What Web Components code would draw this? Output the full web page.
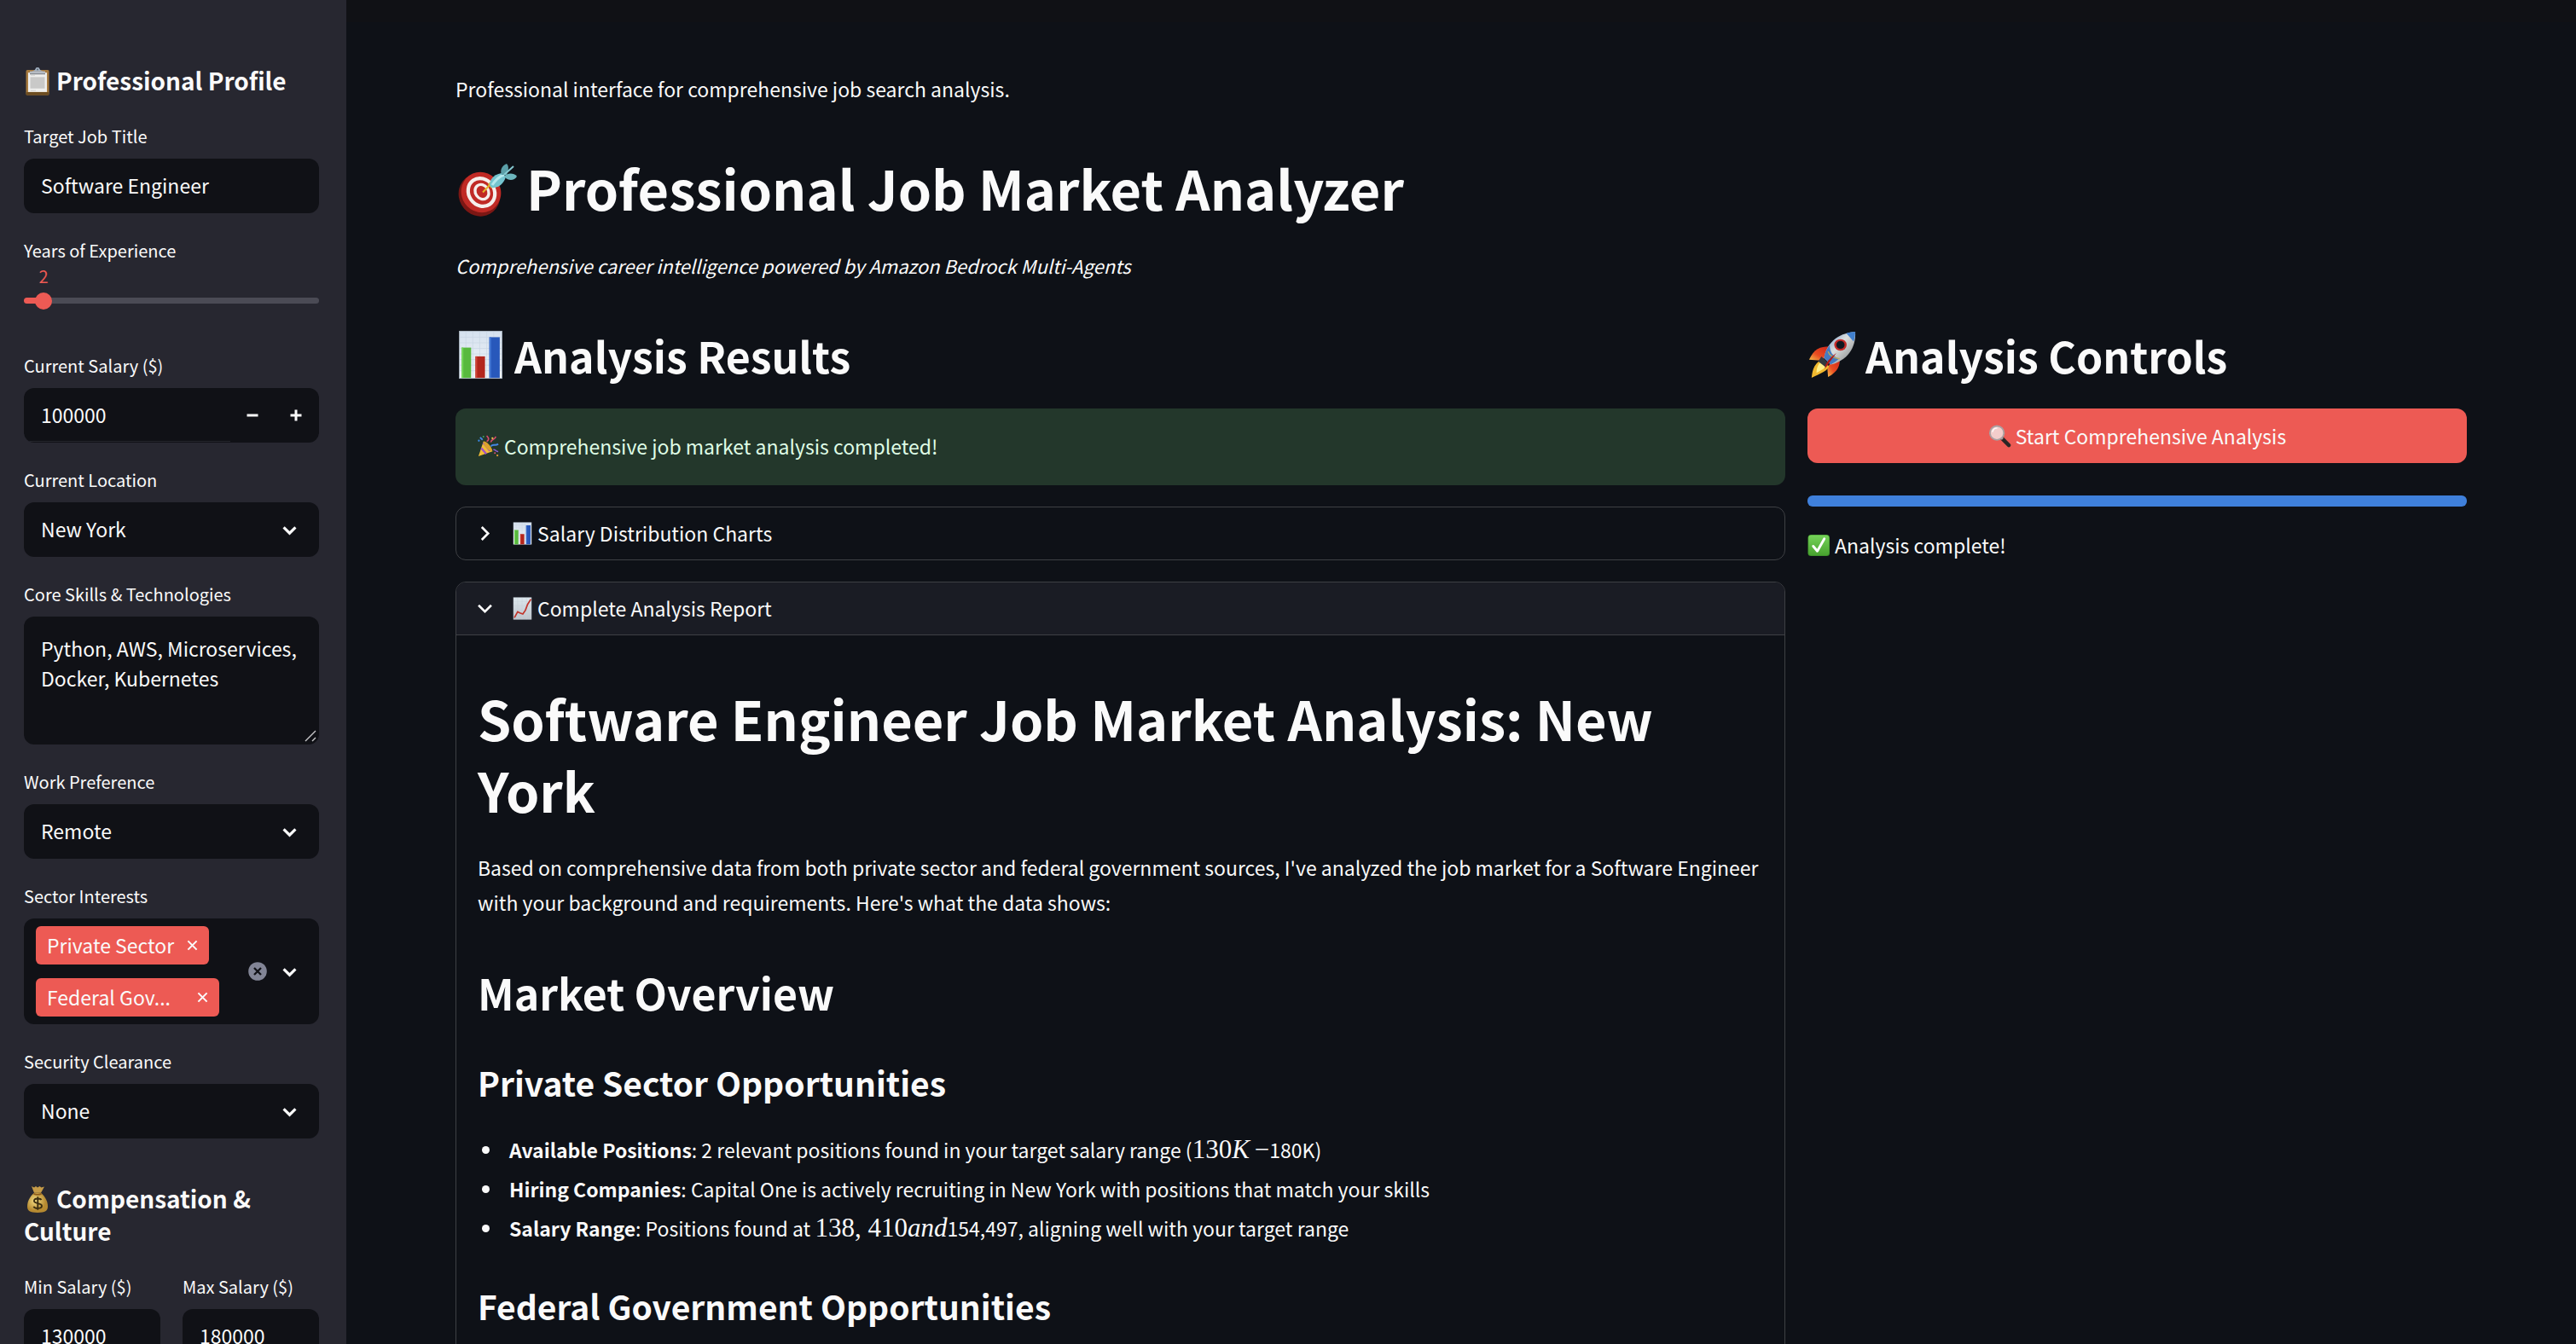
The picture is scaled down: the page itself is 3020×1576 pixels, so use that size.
<!DOCTYPE html>
<html lang="en">
<head>
<meta charset="utf-8">
<title>Professional Job Market Analyzer</title>
<style>
:root{--bg:#0e1117;--side:#272730;--field:#101116;--text:#fafafa;--red:#ed5a54;--green-bg:#23372b;--green-text:#dffde6;--blue:#3f80db;--line:#3e4044;--body:23px;--small:20px}
html{background:var(--bg)}
body{margin:0;color:var(--text);font:400 23px/41px "Noto Sans CJK SC","Open Sans",sans-serif}
</style>
</head>
<body>
<job-app></job-app>
<script>
const PICTURES = {
clipboard:['0 0 32 32','<rect x="2.500" y="3" width="27" height="28.500" rx="1.500" fill="#a77a3e"/><rect x="2.500" y="28" width="27" height="3.500" rx="1.500" fill="#6d4d20"/><rect x="5" y="6" width="22" height="22" fill="#efefed"/><rect x="7.500" y="11" width="17" height="13" fill="#c9c9c8"/><path d="M8 9h5M8 26.500h6" stroke="#d3d3d1"/><path d="M7 4.500h18v3H7z" fill="#b6bcc4"/><path d="M9 4.500c3-.5 4-1.500 4.500-2.500a2.500 2 0 0 1 5 0c.5 1 1.500 2 4.500 2.500z" fill="#a4b3c4"/><circle cx="16" cy="2.500" r="1" fill="#5d6872"/><path d="M7 7.500h18" stroke="#777b80"/>'],
bag:['0 0 32 32','<defs><radialGradient id="g" cx=".4" cy=".4"><stop offset="0" stop-color="#f6df85"/><stop offset="1" stop-color="#b68a31"/></radialGradient></defs><path d="M9 1l3 1.500L14 1l2 1.500L18.500 1l2 1.500L24 1.500l-4 7h-8z" fill="#c59b48"/><path d="M12 8.500C7 13 4 18 4 24c0 5 3 7 12 7s12-2 12-7c0-6-3-11-8-15.500z" fill="url(#g)"/><path d="M11.500 9.500q4.500 2 9 0" stroke="#8d5c1c" stroke-width="1.800" fill="none"/><path d="M20.500 16.500c-1-2-8.500-2.500-8.500 1.200 0 3.500 9 2 9 5.500 0 3.700-8.500 3.700-9.500.8M16.300 12.800v15" fill="none" stroke="#3a2d10" stroke-width="1.900"/>'],
target:['0 0 72 72','<ellipse cx="28" cy="44.500" rx="24" ry="25.500" fill="#7c1714" transform="rotate(-30 28 44.500)"/><ellipse cx="30" cy="41.500" rx="23" ry="24" fill="#c02a25" transform="rotate(-35 30 41.500)"/><ellipse cx="30.500" cy="41.500" rx="15" ry="17" fill="none" stroke="#f5efec" stroke-width="4.200" transform="rotate(-35 30.500 41.500)"/><ellipse cx="31" cy="41" rx="7.600" ry="9" fill="none" stroke="#f5efec" stroke-width="3.400" transform="rotate(-35 31 41)"/><path d="M32 41.500L42 31" stroke="#e5b62b" stroke-width="2"/><path d="M38 32l4 5 3-3-4-5z" fill="#e0b32b"/><path d="M40 33c0-5 3-12 14-14l5 4c-2 9-10 14-17 13z" fill="#74c4cf"/><path d="M43 33c4-6 8-10 14-12" stroke="#b3e8ed" stroke-width="3" fill="none"/><path d="M54 21c-2-5 0-11 6-13 3 3 2 8 0 13z" fill="#5b9fa8"/><path d="M57 23c3-4 11-5 15 0-3 5-10 5-14 1z" fill="#6db6be"/><path d="M57 21L68 11" stroke="#86cad2" stroke-width="2"/>'],
chart:['-2 0 58 62','<defs><linearGradient id="b" x2="0" y2="1"><stop stop-color="#d5e1ef"/><stop offset="1" stop-color="#f2f5f7"/></linearGradient></defs><rect x="2" y="1" width="50" height="60" fill="#aeb9c5"/><rect x="3" y="2" width="48" height="58" fill="url(#b)"/><path d="M3 9h48M3 16h48M3 23h48M3 30h48M3 37h48M3 44h48M3 51h48M10 2v58M18 2v58M26 2v58M34 2v58M42 2v58" stroke="#c8d5e5" stroke-width=".7"/><path d="M5 22h11v38H5z" fill="#58b93e"/><path d="M21 33h11v27H21z" fill="#b3261d"/><path d="M37 9h12v51H37z" fill="#2858bb"/><path d="M5 22h2v38H5z" fill="#76d65b"/><path d="M21 33h2v27h-2z" fill="#cf4437"/><path d="M37 9h2v51h-2z" fill="#4477d3"/>'],
trend:['-2 0 58 62','<defs><linearGradient id="b" x2="0" y2="1"><stop stop-color="#dde7ed"/><stop offset="1" stop-color="#bfc5cd"/></linearGradient></defs><rect x="2" y="1" width="50" height="60" fill="#b4bcc7"/><rect x="3" y="2" width="48" height="58" fill="url(#b)"/><path d="M3 12h48M3 24h48M3 36h48M3 48h48M14 2v58M26 2v58M38 2v58" stroke="#c6d1d9"/><path d="M5 56L14 40 20 43 28 46 35 36 41 20 50 6" fill="none" stroke="#c1342b" stroke-width="4"/>'],
rocket:['0 0 60 60','<defs><linearGradient id="r" x1="0" y1="0" x2="1" y2="1"><stop stop-color="#5c8cc8"/><stop offset=".45" stop-color="#dcdedd"/><stop offset="1" stop-color="#73777b"/></linearGradient><linearGradient id="f" x1="1" y1="0" x2="0" y2="1"><stop stop-color="#cf241a"/><stop offset=".6" stop-color="#ea4d22"/><stop offset="1" stop-color="#f7c24b"/></linearGradient></defs><path d="M27 20C15 20 8 23 2 36l14 1 9-6z" fill="url(#f)"/><path d="M39 33c1 10-2 17-14 24l-1-12 10-12z" fill="url(#f)"/><path d="M17 36l9 8c-1 5-9 8-21 14 1-6 1-16 12-22z" fill="#f1b92f"/><path d="M17 38l6 5c-2 4-7 6-12 9 0-5 1-10 6-14z" fill="#fff08a"/><path d="M17 32l9 9-4 4-9-7z" fill="#34383d"/><path d="M20 34C23 17 35 4 58 2c1 20-10 35-30 40z" fill="url(#r)"/><path d="M20 34c1-6 3-11 7-16 0 8 3 13 11 17-3 3-6 5-10 7z" fill="#457ac0"/><path d="M47 4q5-2 11-2 0 6-2 12z" fill="#4180ce"/><path d="M25 26q2 7 14 9" fill="none" stroke="#b9a75e" stroke-width="1.500"/><ellipse cx="40" cy="18" rx="7.500" ry="7" fill="#c32a28"/><ellipse cx="40" cy="18" rx="5" ry="4.800" fill="#111720"/><path d="M35 28L21 47q1-10 14-19z" fill="#b31815"/>'],
party:['0 0 28 28','<path d="M2 26L8 8q9 3 11 12z" fill="#f1bd37"/><path d="M5.500 16l6 7M8 9.500l8 10" stroke="#9f50c5" stroke-width="2.400"/><path d="M8 8c3-1 10 6 11 12-4 0-11-6-11-12z" fill="#dba12c"/><path d="M12 8c3-2 3-4 0-7M17 9c1-5 5-2 6-7" stroke="#dd4970" stroke-width="1.700" fill="none"/><path d="M17 14c3-4 5 0 9-3M4 3l3 3" stroke="#4586e4" stroke-width="2" fill="none"/><path d="M20 18c3-1 3 3 6 2" stroke="#8e59d5" stroke-width="1.500" fill="none"/><circle cx="2.500" cy="7" r="1.200" fill="#3987e6"/><circle cx="19" cy="4" r="1.200" fill="#f0ce45"/><circle cx="25" cy="25" r="1.200" fill="#e69e35"/><circle cx="22" cy="22" r="1" fill="#e45370"/><circle cx="8" cy="2" r="1" fill="#3fa766"/>'],
search:['0 0 28 28','<path d="M17 17l8 8" stroke="#292525" stroke-width="4.500" stroke-linecap="round"/><path d="M14.500 14.500l3 3" stroke="#a99a99" stroke-width="3"/><circle cx="10.500" cy="10" r="8.500" fill="#f3cdcb" stroke="#aaa0a1" stroke-width="2"/><path d="M5 9q1-5 6-5" stroke="#fff" stroke-width="1.500" fill="none"/>'],
check:['0 0 28 28','<defs><linearGradient id="c" x2="0" y2="1"><stop stop-color="#76d35a"/><stop offset="1" stop-color="#48a32f"/></linearGradient></defs><rect x=".5" y="1" width="26.500" height="26" rx="4" fill="#3e932a"/><rect x="1.200" y="1.500" width="25" height="24.500" rx="3.500" fill="url(#c)"/><path d="M7 15l5 6 8.500-15" fill="none" stroke="#fff" stroke-width="3" stroke-linecap="round" stroke-linejoin="round"/>'],
down:['0 0 16 16','<path d="M1.500 5L8 11.500 14.500 5" fill="none" stroke="currentColor" stroke-width="3"/>'],
thindown:['0 0 16 16','<path d="M1 4.500L8 11.500 15 4.500" fill="none" stroke="currentColor" stroke-width="2.500"/>'],
thinright:['0 0 16 16','<path d="M4.500 1L11.500 8 4.500 15" fill="none" stroke="currentColor" stroke-width="2.500"/>'],
minus:['0 0 14 14','<path d="M.5 7h13" stroke="currentColor" stroke-width="3"/>'],
plus:['0 0 14 14','<path d="M.5 7h13M7 .5v13" stroke="currentColor" stroke-width="3"/>'],
cross:['0 0 14 14','<path d="M1.500 1.500l11 11M12.500 1.500l-11 11" stroke="currentColor" stroke-width="2.200"/>'],
clear:['0 0 22 22','<circle cx="11" cy="11" r="10.800" fill="#828596"/><path d="M7 7l8 8M15 7l-8 8" stroke="#101116" stroke-width="2.300"/>'],
grip:['0 0 16 16','<path d="M2 14L14 2M10 14l4-4" stroke="#c9c9cb" stroke-width="1.400"/>']
};
const BASE = `*{box-sizing:border-box}:host{display:block}:host([hidden]){display:none}input,select,textarea,button{font:inherit;color:inherit;margin:0;border:0;background:none;outline:0}button{cursor:pointer;padding:0}`;
class Base extends HTMLElement {
  constructor(){ super(); this.attachShadow({mode:'open'}); }
  connectedCallback(){ this.shadowRoot.innerHTML = `<style>${BASE}${this.css()}</style>${this.html()}`; }
  css(){ return ''; }
  html(){ return '<slot></slot>'; }
  a(n, d=''){ return this.getAttribute(n) ?? d; }
}
const define = (name, css, html) => customElements.define(name, class extends Base {
  css(){ return typeof css === 'function' ? css(this) : css; }
  html(){ return html ? (typeof html === 'function' ? html(this) : html) : '<slot></slot>'; }
});

define('ui-pic', e => `:host{display:inline-block;flex:none;width:${e.a('w','16')}px;height:${e.a('h', e.a('w','16'))}px;line-height:0;vertical-align:middle}svg{display:block;width:100%;height:100%}`,
  e => { const [box, art] = PICTURES[e.a('name')]; return `<svg viewBox="${box}" preserveAspectRatio="none" aria-hidden="true">${art}</svg>`; });

const FIELD = `:host{min-width:0}label,.label{display:block;font-size:var(--small);line-height:36px;margin-bottom:8px}.box{display:flex;align-items:center;background:var(--field);border-radius:12px;min-height:64px}`;

define('text-field', FIELD + `input{width:100%;height:64px;padding:0 20px 2px;border-radius:12px}`,
  e => `<label for="i">${e.a('label')}</label><div class="box"><input id="i" type="text" value="${e.a('value')}"></div>`);

define('number-field', FIELD + `.box{overflow:hidden;padding-right:2px}input{flex:1;min-width:0;height:64px;padding:0 0 2px 20px}:host([underline]) input{height:62px;border-bottom:1px solid #24252c}button{flex:none;width:51px;height:64px;display:grid;place-items:center}`,
  e => `<label for="i">${e.a('label')}</label><div class="box"><input id="i" type="text" inputmode="numeric" value="${e.a('value')}">${e.hasAttribute('steps') ? '<button aria-label="Decrease"><ui-pic name="minus" w="14"></ui-pic></button><button aria-label="Increase"><ui-pic name="plus" w="14"></ui-pic></button>' : ''}</div>`);

define('select-field', FIELD + `.box{display:grid}.box>*{grid-area:1/1}select{appearance:none;width:100%;height:64px;padding:0 64px 2px 20px;border-radius:12px}option{background:#101116}ui-pic{justify-self:end;margin-right:26px;pointer-events:none}`,
  e => `<label for="i">${e.a('label')}</label><div class="box"><select id="i"><option>${e.a('value')}</option></select><ui-pic name="down" w="17"></ui-pic></div>`);

define('area-field', FIELD + `.box{position:relative}textarea{display:block;width:100%;height:150px;padding:20px;line-height:35px;resize:none;overflow:hidden}ui-pic{position:absolute;right:2px;bottom:2px}`,
  e => `<label for="i">${e.a('label')}</label><div class="box"><textarea id="i">${e.a('value')}</textarea><ui-pic name="grip" w="16"></ui-pic></div>`);

define('slider-field', e => FIELD + `:host{height:109px}label{margin:0 0 2px}output{display:block;width:calc(200% * ${e.a('value')} / ${e.a('max')});text-align:center;color:var(--red);font-size:var(--small);line-height:20px}.rail{display:grid;align-items:center;margin-top:9px}.rail>*{grid-area:1/1}.bar{height:7px;border-radius:4px;background:linear-gradient(to right,var(--red) calc(100% * ${e.a('value')} / ${e.a('max')}),#4b4b55 0)}input{appearance:none;height:19px;margin:0 -10px;padding:0}input::-webkit-slider-thumb{appearance:none;width:20px;height:20px;border-radius:50%;background:var(--red)}`,
  e => `<label for="i">${e.a('label')}</label><output for="i">${e.a('value')}</output><div class="rail"><div class="bar"></div><input id="i" type="range" min="0" max="${e.a('max')}" value="${e.a('value')}"></div>`);

define('ui-tag', `:host{display:flex;align-items:center;gap:15px;height:45px;padding:0 13px;background:var(--red);border-radius:6px;width:max-content}span{white-space:nowrap;line-height:41px}:host([long]) span{width:161px}button{display:grid;place-items:center}`,
  `<span><slot></slot></span><button aria-label="Remove"><ui-pic name="cross" w="13"></ui-pic></button>`);

define('multi-field', FIELD + `.box{padding:9px 26px 9px 14px}.tags{flex:1;min-width:0;display:grid;gap:16px}.tools{display:flex;gap:18px;align-items:center}button{display:grid}`,
  e => `<div class="label" id="l">${e.a('label')}</div><div class="box" role="group" aria-labelledby="l"><div class="tags"><slot></slot></div><div class="tools"><button aria-label="Clear all"><ui-pic name="clear" w="22"></ui-pic></button><button aria-label="Open"><ui-pic name="down" w="17"></ui-pic></button></div></div>`);

define('side-title', `h3{margin:0;font-weight:700;font-size:28px;line-height:38px;padding-bottom:29px}ui-pic{margin:-6px 6px 0 0}`,
  e => `<h3><ui-pic name="${e.a('icon')}" w="32" h="33"></ui-pic><slot></slot></h3>`);

define('side-panel', `:host{background:var(--side);width:406px;flex:none;padding:75px 32px 0 28px;height:100vh;overflow:hidden}.stack{display:grid;grid-template-columns:minmax(0,1fr);gap:26px}.second{margin-top:51px}.pair{display:grid;grid-template-columns:repeat(2,minmax(0,1fr));gap:26px}`,
  `<side-title icon="clipboard">Professional Profile</side-title>
  <div class="stack">
    <text-field label="Target Job Title" value="Software Engineer"></text-field>
    <slider-field label="Years of Experience" value="2" max="30"></slider-field>
    <number-field label="Current Salary ($)" value="100000" steps underline></number-field>
    <select-field label="Current Location" value="New York"></select-field>
    <area-field label="Core Skills &amp; Technologies" value="Python, AWS, Microservices, Docker, Kubernetes"></area-field>
    <select-field label="Work Preference" value="Remote"></select-field>
    <multi-field label="Sector Interests"><ui-tag>Private Sector</ui-tag><ui-tag long>Federal Gov...</ui-tag></multi-field>
    <select-field label="Security Clearance" value="None"></select-field>
  </div>
  <side-title class="second" icon="bag">Compensation &amp; Culture</side-title>
  <div class="pair"><number-field label="Min Salary ($)" value="130000"></number-field><number-field label="Max Salary ($)" value="180000"></number-field></div>`);

define('icon-line', `:host{display:flex;align-items:center;gap:5px}`, e => `<ui-pic name="${e.a('icon')}" w="${e.a('w','27')}" h="27"></ui-pic><span><slot></slot></span>`);
define('column-title', `h2{margin:0;display:flex;align-items:center;gap:10px;font-size:50px;line-height:70px;font-weight:700;padding-bottom:28px}`,
  e => `<h2><ui-pic name="${e.a('icon')}" w="${e.a('w')}" h="58"></ui-pic><span><slot></slot></span></h2>`);
define('success-note', `:host{background:var(--green-bg);color:var(--green-text);border-radius:12px;padding:24px 25px 25px}`);
define('fold-panel', `:host{border:1px solid var(--line);border-radius:12px;overflow:hidden}button{display:flex;align-items:center;gap:23px;width:100%;height:61px;padding:0 25px;text-align:left}:host([open]) button{background:#1a1c24;border-bottom:1px solid var(--line);height:62px}.body{padding:0 25px 60px}`,
  e => `<button aria-expanded="${e.hasAttribute('open')}"><ui-pic name="${e.hasAttribute('open') ? 'thindown' : 'thinright'}" w="17"></ui-pic><icon-line icon="${e.a('icon')}" w="25">${e.a('label')}</icon-line></button>${e.hasAttribute('open') ? '<div class="body"><slot></slot></div>' : ''}`);
define('math-text', `:host{display:inline;font-family:"Liberation Serif",serif;font-size:31px;line-height:0}`);

define('analysis-report', `h1,h2,h3,p,ul{margin:0}h1{font-size:63px;line-height:84px;font-weight:700;padding:55px 0 29px}h2{font-size:50px;line-height:70px;font-weight:700;padding:49px 0 25px}h3{font-size:39px;line-height:54px;font-weight:700;padding:19px 0 32px}ul{padding:0 0 0 30px}ul+h3{padding-top:38px}li{padding:0 0 5px 7px}i{padding-right:6px}`,
  `<h1>Software Engineer Job Market Analysis: New York</h1>
  <p>Based on comprehensive data from both private sector and federal government sources, I've analyzed the job market for a Software Engineer with your background and requirements. Here's what the data shows:</p>
  <h2>Market Overview</h2>
  <h3>Private Sector Opportunities</h3>
  <ul><li><b>Available Positions</b>: 2 relevant positions found in your target salary range (<math-text>130<i>K</i>−</math-text>180K)</li>
  <li><b>Hiring Companies</b>: Capital One is actively recruiting in New York with positions that match your skills</li>
  <li><b>Salary Range</b>: Positions found at <math-text>138, 410<em>and</em></math-text>154,497, aligning well with your target range</li></ul>
  <h3>Federal Government Opportunities</h3>`);

define('control-panel', `.go{display:flex;justify-content:center;align-items:center;width:100%;height:64px;border-radius:12px;background:var(--red)}progress{appearance:none;display:block;width:100%;height:13px;margin:38px 0 25px;border:0;border-radius:6px;overflow:hidden}progress::-webkit-progress-bar{background:#262730}progress::-webkit-progress-value{background:var(--blue)}`,
  `<column-title icon="rocket" w="58">Analysis Controls</column-title>
  <button class="go"><icon-line icon="search">Start Comprehensive Analysis</icon-line></button>
  <progress value="100" max="100" aria-label="Analysis progress"></progress>
  <icon-line icon="check">Analysis complete!</icon-line>`);

define('main-view', `:host{flex:1;min-width:0;height:100vh;overflow:hidden;padding:84px 128px 0;background:linear-gradient(#101115 26px,var(--bg) 0)}p,h1{margin:0}h1{display:flex;align-items:center;gap:11px;font-size:63px;line-height:84px;font-weight:700;padding:53px 0 29px}em{font-size:22px}.cols{display:flex;gap:26px;margin-top:49px}.left{flex:2 1 13px;min-width:0}.right{flex:1 1 0;min-width:0}.stack{display:grid;gap:25px}`,
  `<p>Professional interface for comprehensive job search analysis.</p>
  <h1><ui-pic name="target" w="72" h="72"></ui-pic><span>Professional Job Market Analyzer</span></h1>
  <p><em>Comprehensive career intelligence powered by Amazon Bedrock Multi-Agents</em></p>
  <div class="cols"><div class="left"><column-title icon="chart" w="59">Analysis Results</column-title><div class="stack">
    <success-note><icon-line icon="party">Comprehensive job market analysis completed!</icon-line></success-note>
    <fold-panel icon="chart" label="Salary Distribution Charts"></fold-panel>
    <fold-panel open icon="trend" label="Complete Analysis Report"><analysis-report></analysis-report></fold-panel>
  </div></div><control-panel class="right"></control-panel></div>`);

define('job-app', `:host{display:flex;height:100vh;overflow:hidden}`, `<side-panel></side-panel><main-view></main-view>`);
</script>
</body>
</html>
